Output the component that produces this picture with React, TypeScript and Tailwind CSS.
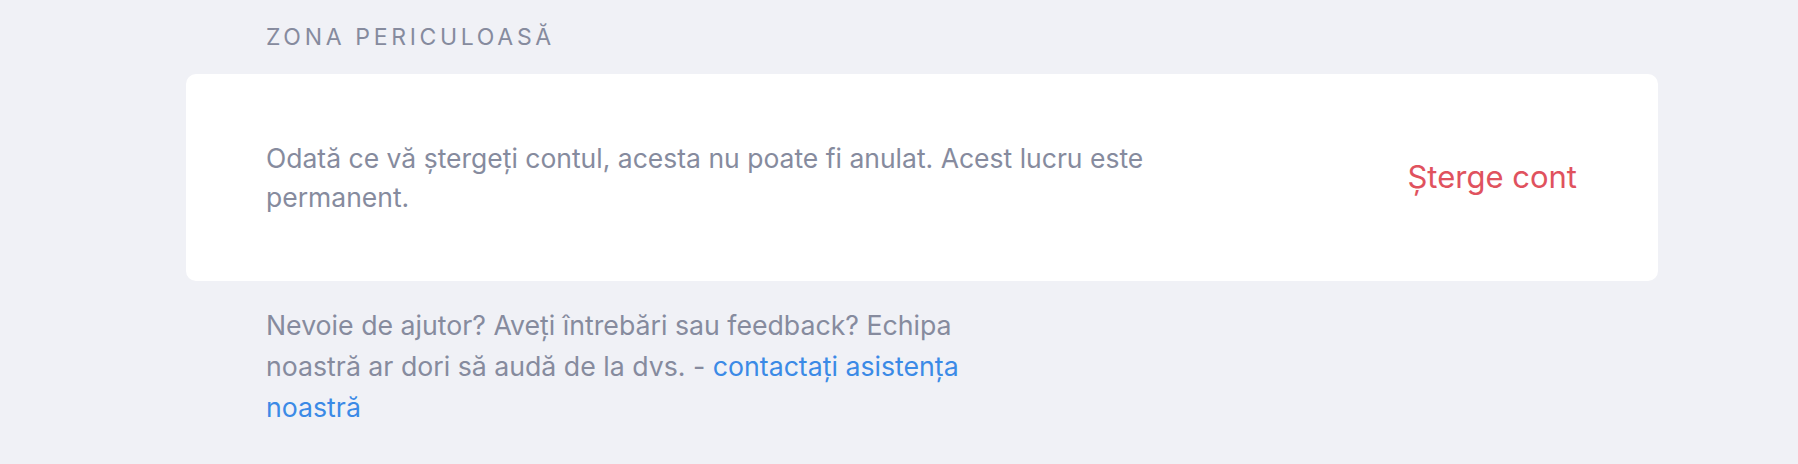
const App = () => {
  return (
    <div className="min-h-[464px] w-full bg-[#f0f1f6] font-['Inter',sans-serif] pl-[186px] pr-[140px] pt-[22px]">
      {/* Section title */}
      <h2 className="px-[80px] text-[23px] leading-[30px] tracking-[0.16em] text-[#868b9e] uppercase">
        Zona periculoasă
      </h2>

      {/* Danger card */}
      <div className="mt-[22px] h-[207px] rounded-[10px] bg-white pl-[80px] pr-[81px] flex items-center justify-between">
        <p className="max-w-[900px] text-[26.5px] leading-[39px] text-[#868b9e]">
          Odată ce vă ștergeți contul, acesta nu poate fi anulat. Acest lucru este permanent.
        </p>
        <button className="text-[31px] text-[#e0525e]">Șterge cont</button>
      </div>

      {/* Help text */}
      <p className="mt-[24px] px-[80px] max-w-[720px] box-content text-[26.7px] leading-[41px] text-[#868b9e]">
        Nevoie de ajutor? Aveți întrebări sau feedback? Echipa noastră ar dori să audă de la dvs. -{" "}
        <a href="#" className="text-[#3b8ae6]">
          contactați asistența noastră
        </a>
      </p>
    </div>
  );
};

export default App;
